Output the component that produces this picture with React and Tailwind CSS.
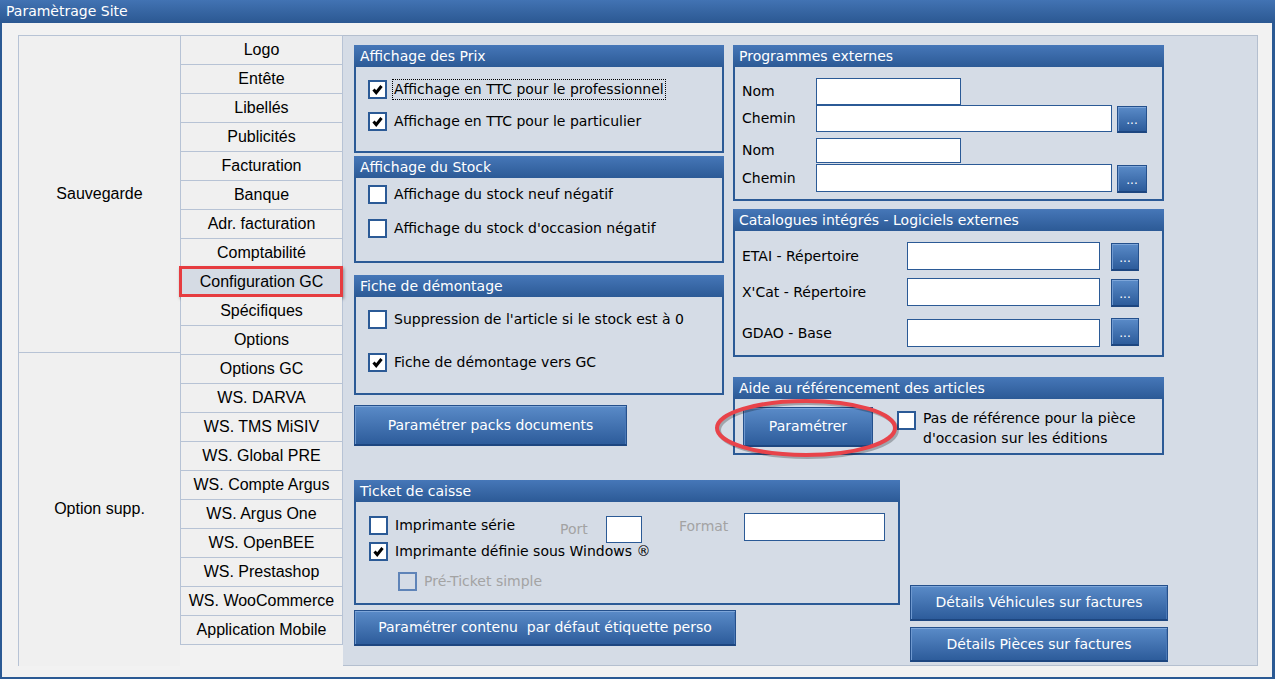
import React from 'react'

const tabs = [
  'Logo', 'Entête', 'Libellés', 'Publicités', 'Facturation', 'Banque', 'Adr. facturation',
  'Comptabilité', 'Configuration GC', 'Spécifiques', 'Options', 'Options GC', 'WS. DARVA',
  'WS. TMS MiSIV', 'WS. Global PRE', 'WS. Compte Argus', 'WS. Argus One', 'WS. OpenBEE',
  'WS. Prestashop', 'WS. WooCommerce', 'Application Mobile',
]

const blueGrad = 'bg-gradient-to-b from-[#5a8bc8] to-[#2d5c9b]'

function Group({ title, className = '', children }) {
  return (
    <div className={`border-2 border-t-0 border-[#2b5a96] flex flex-col ${className}`}>
      <div className="h-[22px] shrink-0 -mx-[2px] px-[6px] bg-gradient-to-b from-[#4677b8] to-[#2c5a96] text-white leading-[22px]">
        {title}
      </div>
      <div className="flex-1 flex flex-col">{children}</div>
    </div>
  )
}

function Check({ checked, disabled }) {
  return (
    <span
      className={`w-[19px] h-[19px] shrink-0 border-2 flex items-center justify-center ${
        disabled ? 'border-[#5f84b8] bg-transparent' : 'border-[#2b5a96] bg-white'
      }`}
    >
      {checked && (
        <svg width="13" height="13" viewBox="0 0 13 13">
          <path d="M2.5 6.5 L5.2 9.6 L10.5 3" stroke="#000" strokeWidth="3" fill="none" />
        </svg>
      )}
    </span>
  )
}

function Row({ checked, label, className = '', focus }) {
  return (
    <div className={`h-[20px] flex items-center ${className}`}>
      <Check checked={checked} />
      {focus ? (
        <span className="ml-[5px] px-[1px] border border-dotted border-black leading-[19px]">{label}</span>
      ) : (
        <span className="ml-[7px] leading-[20px]">{label}</span>
      )}
    </div>
  )
}

function BlueButton({ className = '', children }) {
  return (
    <div
      className={`flex items-center justify-center text-white border border-[#24508c] border-b-2 border-b-[#1d4680] shadow-[inset_0_1px_0_0_#7ea6d9,inset_1px_0_0_0_#6e98cf,inset_-1px_0_0_0_#4a78b6] ${blueGrad} ${className}`}
    >
      {children}
    </div>
  )
}

function Dots({ className = '' }) {
  return (
    <div
      className={`flex items-end justify-center pb-[5px] text-white text-[12px] leading-none border border-[#24508c] border-b-2 border-b-[#1d4680] shadow-[inset_0_1px_0_0_#7ea6d9,inset_1px_0_0_0_#6e98cf] ${blueGrad} ${className}`}
    >
      ...
    </div>
  )
}

function Field({ className = '' }) {
  return <div className={`bg-white border border-[#2b5a96] ${className}`} />
}

export default function App() {
  return (
    <div className="w-[1275px] h-[679px] bg-[#2b5a94] flex flex-col overflow-hidden font-['DejaVu_Sans',sans-serif] text-[14px] text-black">
      <div className="h-[23px] shrink-0 bg-gradient-to-b from-[#4273b3] to-[#2b5892] text-white pl-[6px] leading-[23px]">
        Paramètrage Site
      </div>

      <div className="flex-1 ml-[2px] mr-[3px] mb-[2px] bg-[#f2f2f2] pt-[12px] pl-[16px]">
        <div className="flex h-[631px]">
          {/* colonne des groupes */}
          <div className="w-[162px] border-l border-t border-[#b7c3d5] bg-[#f0f0f0] flex flex-col font-['Liberation_Sans',sans-serif] text-[16px]">
            <div className="h-[317px] border-b border-[#b7c3d5] flex items-center justify-center">Sauvegarde</div>
            <div className="flex-1 flex items-center justify-center pb-[2px]">Option supp.</div>
          </div>

          {/* onglets */}
          <div className="w-[163px] self-start border-x border-t border-[#b7c3d5] font-['Liberation_Sans',sans-serif] text-[16px]">
            {tabs.map((t) => {
              const sel = t === 'Configuration GC'
              return (
                <div
                  key={t}
                  className={`relative h-[29px] border-b border-[#b7c3d5] flex items-center justify-center ${
                    sel ? 'bg-[#d5dbe4]' : 'bg-[#f0f0f0]'
                  }`}
                >
                  {t}
                  {sel && (
                    <div className="absolute -top-[2px] -left-[2px] -right-[1px] bottom-[-1px] border-[3px] border-[#e63c40] shadow-[1px_2px_3px_rgba(0,0,0,0.35)]" />
                  )}
                </div>
              )
            })}
          </div>

          {/* panneau principal */}
          <div className="w-[915px] bg-[#d5dce6] border-t border-r border-b border-[#b4bfcf] pl-[11px] pt-[9px]">
            <div className="flex items-start gap-[9px]">
              <div className="w-[370px] flex flex-col">
                <Group title="Affichage des Prix" className="h-[108px]">
                  <div className="pl-[12px] pt-[12px]">
                    <Row checked focus label="Affichage en TTC pour le professionnel" />
                    <Row checked label="Affichage en TTC pour le particulier" className="mt-[12px]" />
                  </div>
                </Group>
                <Group title="Affichage du Stock" className="h-[107px] mt-[3px]">
                  <div className="pl-[12px] pt-[6px]">
                    <Row label="Affichage du stock neuf négatif" />
                    <Row label="Affichage du stock d'occasion négatif" className="mt-[14px]" />
                  </div>
                </Group>
                <Group title="Fiche de démontage" className="h-[120px] mt-[12px]">
                  <div className="pl-[12px] pt-[12px]">
                    <Row label="Suppression de l'article si le stock est à 0" />
                    <Row checked label="Fiche de démontage vers GC" className="mt-[23px]" />
                  </div>
                </Group>
                <BlueButton className="mt-[10px] h-[41px] w-[273px]">Paramétrer packs documents</BlueButton>
              </div>

              <div className="w-[431px] flex flex-col">
                <Group title="Programmes externes" className="h-[156px]">
                  <div className="pl-[7px] pt-[11px]">
                    <div className="h-[27px] flex items-center">
                      <span className="w-[74px]">Nom</span>
                      <Field className="w-[145px] h-full" />
                    </div>
                    <div className="h-[27px] flex items-center">
                      <span className="w-[74px]">Chemin</span>
                      <Field className="w-[296px] h-full" />
                      <Dots className="ml-[5px] w-[30px] h-[27px] mt-[2px]" />
                    </div>
                    <div className="h-[25px] mt-[6px] flex items-center">
                      <span className="w-[74px]">Nom</span>
                      <Field className="w-[145px] h-full" />
                    </div>
                    <div className="h-[28px] mt-[1px] flex items-center">
                      <span className="w-[74px]">Chemin</span>
                      <Field className="w-[296px] h-full" />
                      <Dots className="ml-[5px] w-[30px] h-[28px] mt-[2px]" />
                    </div>
                  </div>
                </Group>

                <Group title="Catalogues intégrés - Logiciels externes" className="h-[148px] mt-[8px]">
                  <div className="pl-[7px] pt-[11px]">
                    <div className="h-[28px] flex items-center">
                      <span className="w-[165px]">ETAI - Répertoire</span>
                      <Field className="w-[193px] h-full" />
                      <Dots className="ml-[11px] w-[28px] h-[28px] mt-[2px]" />
                    </div>
                    <div className="h-[28px] mt-[8px] flex items-center">
                      <span className="w-[165px]">X'Cat - Répertoire</span>
                      <Field className="w-[193px] h-full" />
                      <Dots className="ml-[11px] w-[28px] h-[28px] mt-[2px]" />
                    </div>
                    <div className="h-[28px] mt-[13px] flex items-center">
                      <span className="w-[165px]">GDAO - Base</span>
                      <Field className="w-[193px] h-full" />
                      <Dots className="ml-[11px] w-[28px] h-[28px] -mt-[3px]" />
                    </div>
                  </div>
                </Group>

                <Group title="Aide au référencement des articles" className="h-[78px] mt-[20px] relative">
                  <div className="pl-[8px] pt-[8px] flex items-start">
                    <BlueButton className="w-[130px] h-[40px]">Paramétrer</BlueButton>
                    <div className="ml-[24px] mt-[4px]">
                      <Check />
                    </div>
                    <div className="ml-[7px] mt-[1px] leading-[20px]">
                      Pas de référence pour la pièce
                      <br />
                      d'occasion sur les éditions
                    </div>
                  </div>
                  <svg
                    className="absolute left-[-21px] top-[21px] pointer-events-none"
                    width="186"
                    height="62"
                    viewBox="0 0 186 62"
                  >
                    <ellipse cx="94" cy="32" rx="89" ry="27" fill="none" stroke="rgba(0,0,0,0.25)" strokeWidth="4" />
                    <ellipse cx="92" cy="30" rx="89" ry="27" fill="none" stroke="#e8434a" strokeWidth="4" />
                  </svg>
                </Group>
              </div>
            </div>

            <div className="flex items-start mt-[25px]">
              <div className="w-[546px] flex flex-col">
                <Group title="Ticket de caisse" className="h-[125px]">
                  <div className="pl-[13px] pt-[11px]">
                    <div className="flex items-start">
                      <div className="w-[191px] h-[19px] mt-[3px] flex items-center">
                        <Check />
                        <span className="ml-[7px]">Imprimante série</span>
                      </div>
                      <span className="w-[46px] mt-[6px] leading-[20px] text-[#a3a3a3]">Port</span>
                      <Field className="w-[36px] h-[27px] mt-[3px]" />
                      <span className="w-[65px] ml-[37px] mt-[3px] leading-[20px] text-[#a3a3a3]">Format</span>
                      <Field className="w-[141px] h-[28px]" />
                    </div>
                    <div className="h-[19px] -mt-[1px] flex items-center">
                      <Check checked />
                      <span className="ml-[7px]">Imprimante définie sous Windows ®</span>
                    </div>
                    <div className="h-[19px] mt-[11px] ml-[29px] flex items-center">
                      <Check disabled />
                      <span className="ml-[7px] text-[#a3a3a3]">Pré-Ticket simple</span>
                    </div>
                  </div>
                </Group>
                <BlueButton className="mt-[5px] h-[36px] w-[382px] whitespace-pre">
                  Paramétrer contenu  par défaut étiquette perso
                </BlueButton>
              </div>

              <div className="ml-[10px] w-[258px] pt-[105px] flex flex-col">
                <BlueButton className="h-[36px]">Détails Véhicules sur factures</BlueButton>
                <BlueButton className="h-[35px] mt-[6px]">Détails Pièces sur factures</BlueButton>
              </div>
            </div>
          </div>
        </div>
      </div>
    </div>
  )
}
